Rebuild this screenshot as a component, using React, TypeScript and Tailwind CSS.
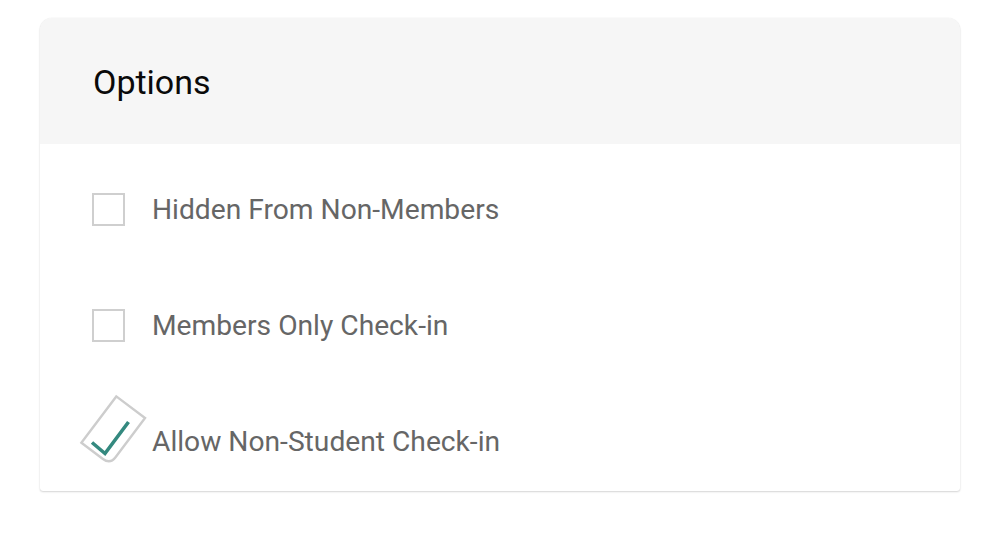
import React from "react";

const options = [
  { label: "Hidden From Non-Members", checked: false },
  { label: "Members Only Check-in", checked: false },
  { label: "Allow Non-Student Check-in", checked: true },
];

function Box({ checked }: { checked: boolean }) {
  if (!checked) {
    return <div className="w-[33px] h-[33px] border-2 border-[#cfcfcf] shrink-0" />;
  }
  // mid-animation checked state: tilted box with the tick inside
  return (
    <div className="relative w-[33px] h-[33px] shrink-0">
      <svg
        width="70"
        height="66"
        viewBox="0 0 70 66"
        className="absolute left-[-12px] top-[-27px] overflow-visible"
      >
        <g transform="translate(34 33) rotate(37)">
          <path
            d="M -19 -29 H 17 V 20 Q 17 29 8 29 H -19 Z"
            fill="none"
            stroke="#cdcdcd"
            strokeWidth="2.4"
          />
        </g>
        <polyline
          points="12,44.5 25,55.5 48.5,24"
          fill="none"
          stroke="#34897f"
          strokeWidth="3.6"
        />
      </svg>
    </div>
  );
}

export default function App() {
  return (
    <div className="min-h-screen bg-white pt-[18px] px-[40px]" style={{ fontFamily: "Roboto, 'Noto Sans', sans-serif" }}>
      <div className="w-[920px] bg-white rounded-t-xl rounded-b-[3px] shadow-[0_1px_2px_rgba(0,0,0,0.16),0_0_1px_rgba(0,0,0,0.12)] overflow-hidden">
        <div className="h-[126px] bg-[#f6f6f6] flex items-center pl-[53px]">
          <h2 className="text-[34px] text-[#0a0a0a] leading-none pt-[2px]">Options</h2>
        </div>
        <div className="flex flex-col gap-[82px] pl-[52px] pt-[48px] pb-[33px]">
          {options.map((o) => (
            <label key={o.label} className="flex items-center h-[34px] gap-[27px]">
              <Box checked={o.checked} />
              <span className="text-[28.2px] text-[#666] leading-none pt-[2px]">{o.label}</span>
            </label>
          ))}
        </div>
      </div>
    </div>
  );
}
